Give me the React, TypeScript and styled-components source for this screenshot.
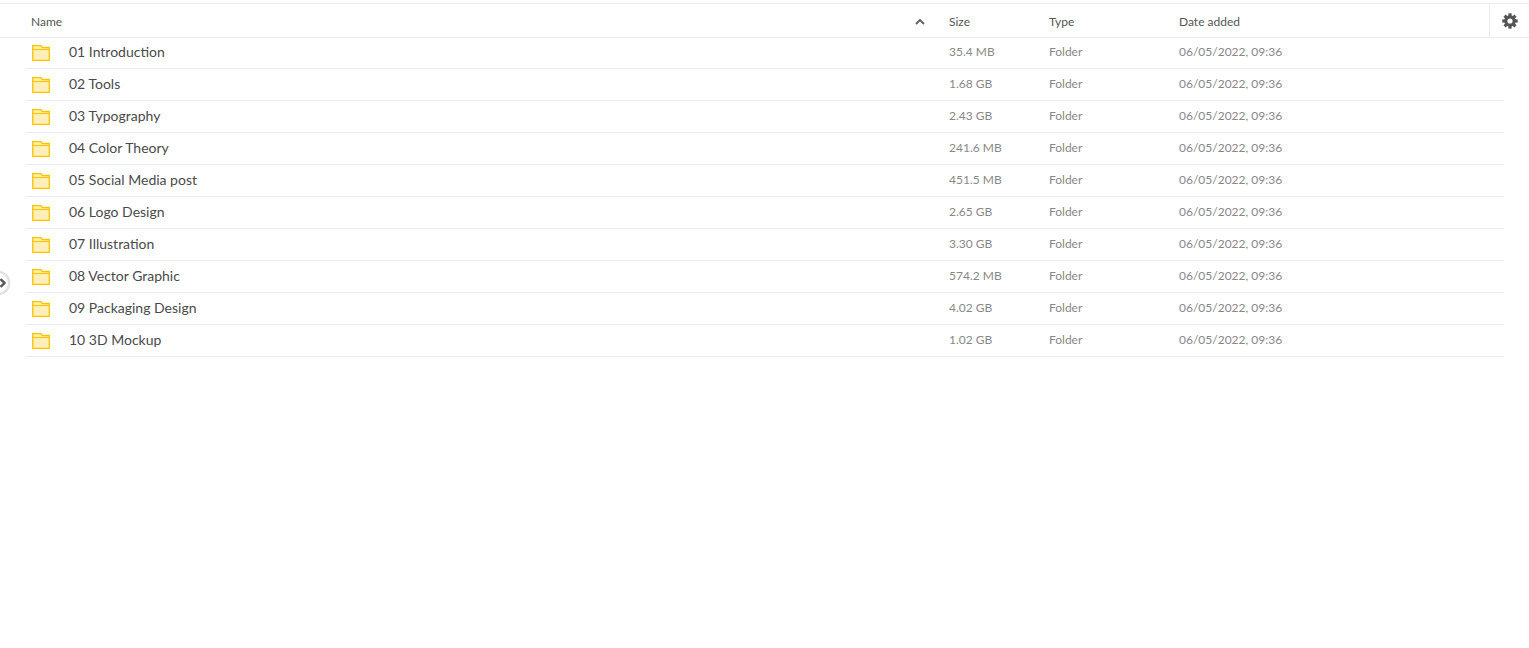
import React from "react";
import styled, { createGlobalStyle } from "styled-components";

const GlobalStyle = createGlobalStyle`
  html, body {
    margin: 0;
    padding: 0;
    background: #fff;
    font-family: Lato, "Open Sans", sans-serif;
  }
  body {
    height: 648px;
    overflow: hidden;
  }
`;

const Page = styled.div`
  position: relative;
  padding-top: 3px;
`;

const HeaderBar = styled.div`
  display: flex;
  height: 33px;
  border-top: 1px solid #ebebeb;
  border-bottom: 1px solid #ebebeb;
`;

const HeaderColumns = styled.div`
  flex: 1;
  display: grid;
  grid-template-columns: 923px 100px 130px 1fr;
  align-items: center;
  padding: 2px 0 0 26px;
`;

const HeaderCell = styled.div<{ $first?: boolean }>`
  display: flex;
  align-items: center;
  justify-content: space-between;
  padding-left: ${(p) => (p.$first ? "5px" : "0")};
  font-size: 12px;
  color: #555;
`;

const SortCaret = styled.svg`
  width: 10px;
  height: 6px;
  margin-right: 24px;
  fill: none;
  stroke: #666;
  stroke-width: 2;
`;

const SettingsCell = styled.div`
  width: 39px;
  display: flex;
  align-items: center;
  justify-content: center;
  border-left: 1px solid #ebebeb;
`;

const GearIcon = styled.svg`
  width: 16px;
  height: 16px;
  margin-top: 1px;
`;

const Rows = styled.div`
  margin: -1px 25px 0 26px;
`;

const Row = styled.div`
  display: grid;
  grid-template-columns: 923px 100px 130px 1fr;
  align-items: center;
  height: 29px;
  padding-bottom: 2px;
  border-bottom: 1px solid #ebebeb;
`;

const NameCell = styled.div`
  display: flex;
  align-items: center;
  padding-left: 5px;
  font-size: 14px;
  color: #4a4a4a;
`;

const FolderIcon = styled.svg`
  width: 18px;
  height: 16px;
  margin: 3px 19px 0 1px;
`;

const MetaCell = styled.div`
  font-size: 12px;
  color: #888;
`;

const SideHandle = styled.div`
  position: absolute;
  left: -14px;
  top: 271px;
  box-sizing: border-box;
  width: 24px;
  height: 24px;
  border: 2px solid #e2e2e2;
  border-radius: 50%;
  background: #fff;
  box-shadow: 0 0 1px #ccc;
  display: flex;
  align-items: center;
  justify-content: flex-end;
  padding-right: 2px;
`;

const HandleArrow = styled.svg`
  width: 7px;
  height: 10px;
  fill: none;
  stroke: #555;
  stroke-width: 2.4;
`;

const folders = [
  { name: "01 Introduction", size: "35.4 MB" },
  { name: "02 Tools", size: "1.68 GB" },
  { name: "03 Typography", size: "2.43 GB" },
  { name: "04 Color Theory", size: "241.6 MB" },
  { name: "05 Social Media post", size: "451.5 MB" },
  { name: "06 Logo Design", size: "2.65 GB" },
  { name: "07 Illustration", size: "3.30 GB" },
  { name: "08 Vector Graphic", size: "574.2 MB" },
  { name: "09 Packaging Design", size: "4.02 GB" },
  { name: "10 3D Mockup", size: "1.02 GB" },
];

const Folder = () => (
  <FolderIcon viewBox="0 0 18 16">
    <path
      d="M.7.7H9l1.5 1.8h6.8v12.8H.7z"
      fill="#ffeeb5"
      stroke="#fdc400"
      strokeWidth="1.3"
    />
    <path d="M.7 4.5h16.6" stroke="#fdc400" strokeWidth="1.1" />
  </FolderIcon>
);

const Gear = () => (
  <GearIcon viewBox="0 0 16 16">
    {[0, 45, 90, 135, 180, 225, 270, 315].map((angle) => (
      <rect
        key={angle}
        x="6.4"
        y="0.3"
        width="3.2"
        height="4"
        fill="#555"
        transform={`rotate(${angle} 8 8)`}
      />
    ))}
    <circle cx="8" cy="8" r="4.2" fill="none" stroke="#555" strokeWidth="3.2" />
  </GearIcon>
);

export default function App() {
  return (
    <Page>
      <GlobalStyle />
      <HeaderBar>
        <HeaderColumns>
          <HeaderCell $first>
            Name
            <SortCaret viewBox="0 0 10 6">
              <path d="M1 5l4-4 4 4" />
            </SortCaret>
          </HeaderCell>
          <HeaderCell>Size</HeaderCell>
          <HeaderCell>Type</HeaderCell>
          <HeaderCell>Date added</HeaderCell>
        </HeaderColumns>
        <SettingsCell>
          <Gear />
        </SettingsCell>
      </HeaderBar>
      <Rows>
        {folders.map((folder) => (
          <Row key={folder.name}>
            <NameCell>
              <Folder />
              {folder.name}
            </NameCell>
            <MetaCell>{folder.size}</MetaCell>
            <MetaCell>Folder</MetaCell>
            <MetaCell>06/05/2022, 09:36</MetaCell>
          </Row>
        ))}
      </Rows>
      <SideHandle>
        <HandleArrow viewBox="0 0 7 10">
          <path d="M1.5 1l4 4-4 4" />
        </HandleArrow>
      </SideHandle>
    </Page>
  );
}
